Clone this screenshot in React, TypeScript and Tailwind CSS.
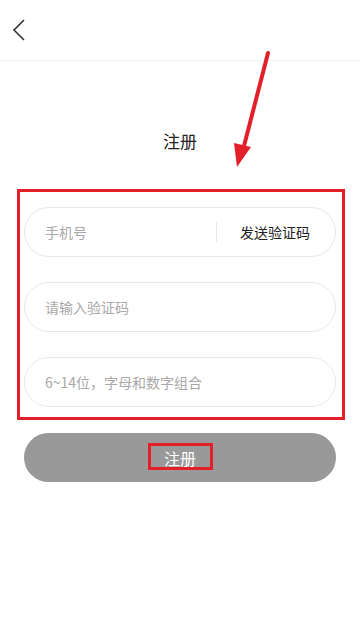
const font = { fontFamily: '"Noto Sans CJK SC", "Noto Sans", sans-serif' };

function BackIcon() {
  return (
    <svg width="16" height="24" viewBox="0 0 16 24" fill="none" aria-hidden>
      <path d="M12 2 L2 12 L12 22" stroke="#333" strokeWidth="1.6" />
    </svg>
  );
}

export default function App() {
  return (
    <div className="relative h-[621px] w-[360px] overflow-hidden bg-white" style={font}>
      {/* Header */}
      <div className="flex h-[61px] items-center border-b border-[#f2f2f2] pl-[12px]">
        <BackIcon />
      </div>

      <div className="mt-[68px] text-center text-[17px] leading-[24px] text-[#222]">注册</div>

      {/* Form */}
      <div className="mt-[54px] flex flex-col gap-[25px] px-6">
        <div className="flex h-[50px] items-center rounded-full border border-[#e8e8e8] pl-[20px] pr-[25px]">
          <span className="flex-1 text-[14px] text-[#a8a8a8]">手机号</span>
          <span className="h-[20px] w-px bg-[#e8e8e8]" />
          <span className="ml-[23px] text-[14px] text-[#222]">发送验证码</span>
        </div>
        <div className="flex h-[50px] items-center rounded-full border border-[#e8e8e8] pl-[20px]">
          <span className="text-[14px] text-[#a8a8a8]">请输入验证码</span>
        </div>
        <div className="flex h-[50px] items-center rounded-full border border-[#e8e8e8] pl-[20px]">
          <span className="text-[14px] text-[#a8a8a8]">6~14位，字母和数字组合</span>
        </div>
        <button
          type="button"
          className="mt-px flex h-[49px] items-center justify-center rounded-full bg-[#999999] text-[16px] text-white"
        >
          注册
        </button>
      </div>

      {/* Annotations */}
      <div className="pointer-events-none absolute left-[17px] top-[189px] h-[231px] w-[328px] border-[3px] border-[#e3202a]" />
      <div className="pointer-events-none absolute left-[148px] top-[443px] h-[27px] w-[65px] border-[3px] border-[#e3202a]" />
      <svg className="pointer-events-none absolute left-0 top-0" width="360" height="200" aria-hidden>
        <path d="M268 53 L244 146" stroke="#e3202a" strokeWidth="4" strokeLinecap="round" />
        <path d="M234 143 L251 147 L237 167 Z" fill="#e3202a" />
      </svg>
    </div>
  );
}
